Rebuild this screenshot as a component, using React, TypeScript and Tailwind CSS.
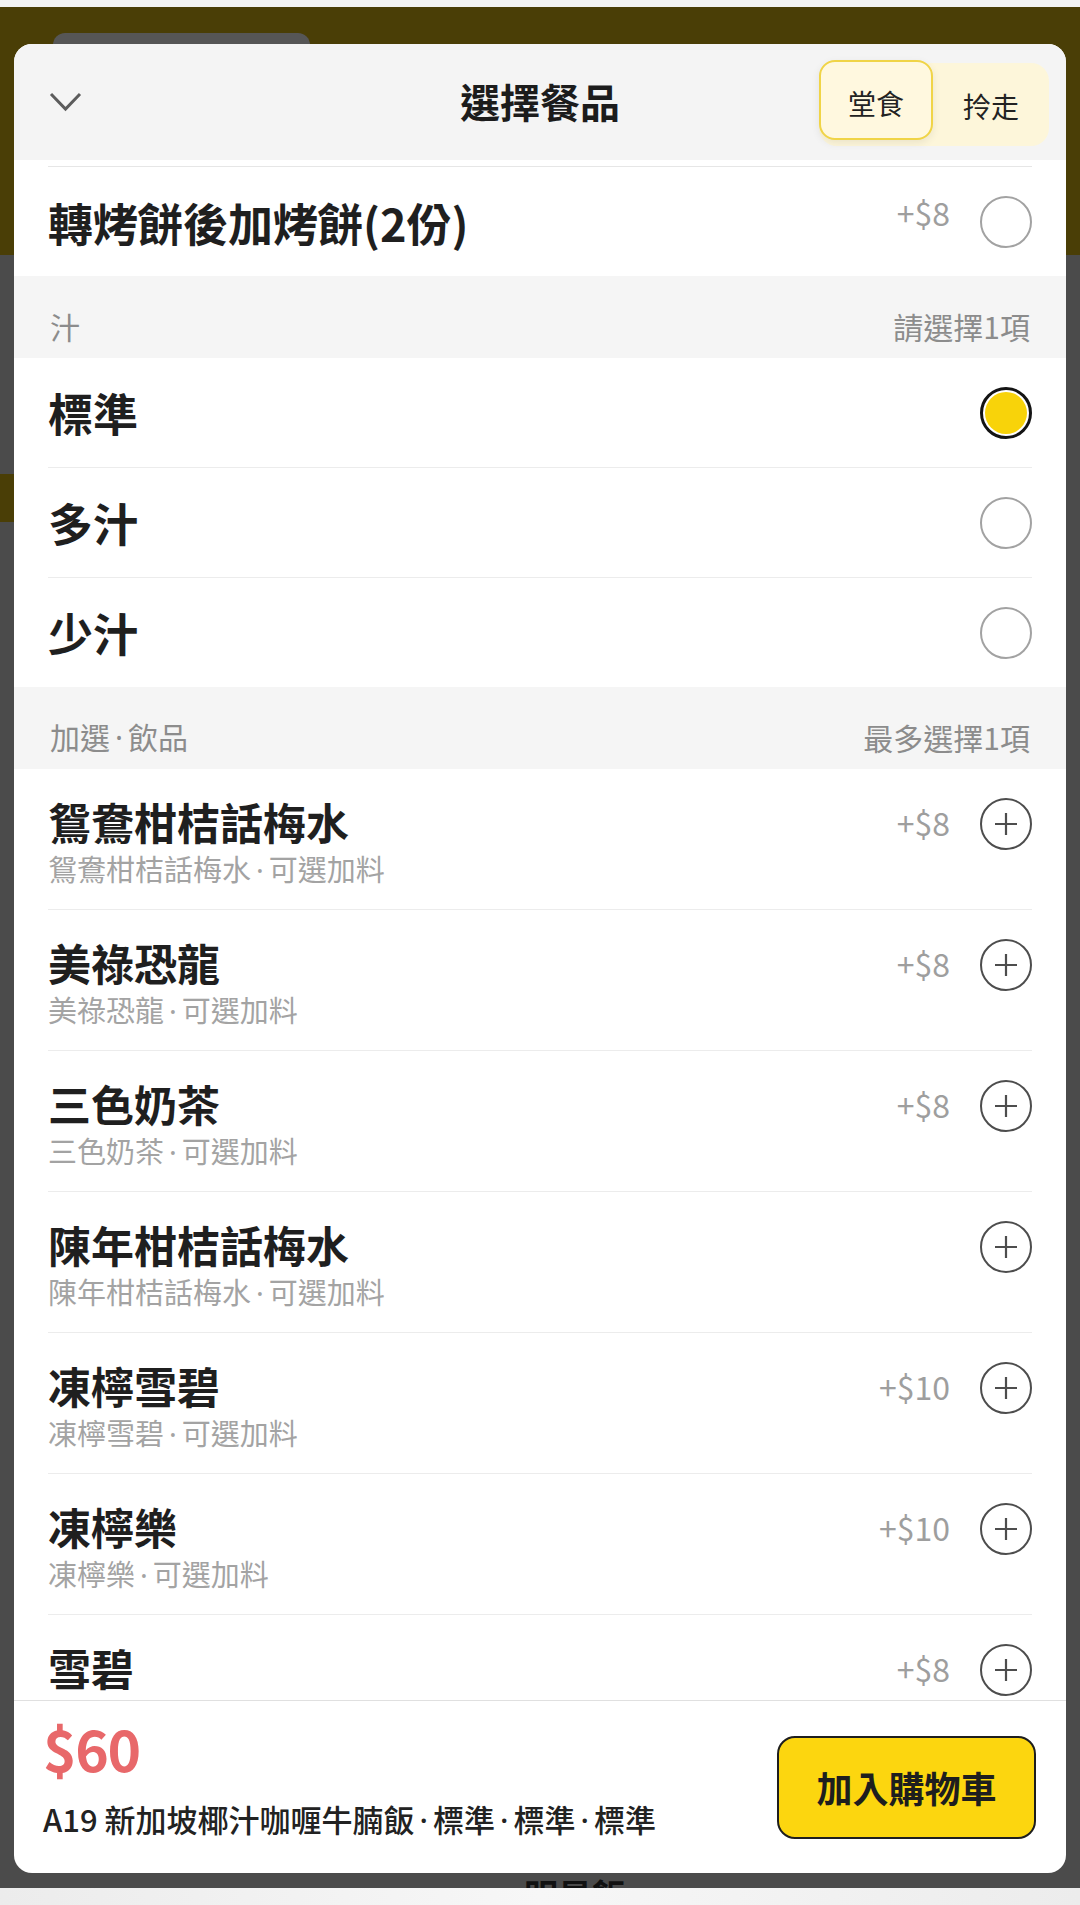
import React from "react";

const font = { fontFamily: '"Noto Sans CJK TC", "Noto Sans", sans-serif' };

// narrow middle dot, like the one the app renders between words
function Dot() {
  return <span className="font-['Noto_Sans'] px-[5px]">·</span>;
}

function Radio({ checked }: { checked?: boolean }) {
  if (checked) {
    return (
      <div className="w-[52px] h-[52px] shrink-0 rounded-full border-[3px] border-[#141414] bg-white p-[2px]">
        <div className="w-full h-full rounded-full bg-[#f8d30a]" />
      </div>
    );
  }
  return <div className="w-[52px] h-[52px] shrink-0 rounded-full border-[2.5px] border-[#a2a2a2]" />;
}

function PlusCircle() {
  return (
    <div className="w-[52px] h-[52px] shrink-0 rounded-full border-[2.5px] border-[#4d4d4d] flex items-center justify-center">
      <svg width="24" height="24" viewBox="0 0 24 24" fill="none" stroke="#4d4d4d" strokeWidth="2.2">
        <path d="M12 1v22M1 12h22" />
      </svg>
    </div>
  );
}

const options = [
  { name: "標準", checked: true },
  { name: "多汁" },
  { name: "少汁" },
];

const drinks = [
  { name: "鴛鴦柑桔話梅水", price: "+$8" },
  { name: "美祿恐龍", price: "+$8" },
  { name: "三色奶茶", price: "+$8" },
  { name: "陳年柑桔話梅水", price: "" },
  { name: "凍檸雪碧", price: "+$10" },
  { name: "凍檸樂", price: "+$10" },
];

export default function App() {
  return (
    <div className="relative w-[1080px] h-[1905px] overflow-hidden flex flex-col" style={font}>
      {/* background page under the dim overlay */}
      <div className="h-[7px] bg-[#f3f3f3]" />
      <div className="h-[248px] bg-[#4a3e06]">
        <div className="mt-[26px] ml-[53px] w-[257px] h-[20px] rounded-t-[12px] bg-[#565656]" />
      </div>
      <div className="flex-1 bg-[#4b4b4b] flex flex-col">
        <div className="mt-[219px] h-[48px] w-[14px] bg-[#4a3e06]" />
        <div className="mt-auto h-[15px] overflow-hidden flex justify-center">
          <span className="text-[34px] font-bold leading-[40px] text-[#111] mt-[2px] ml-[70px]">明星飯</span>
        </div>
      </div>
      <div className="h-[17px] bg-gradient-to-r from-[#ececec] via-[#f7f7f7] to-[#ececec]" />

      {/* bottom sheet */}
      <div className="absolute left-[14px] top-[44px] w-[1052px] h-[1829px] rounded-[18px] overflow-hidden bg-white flex flex-col">
        <div className="h-[116px] shrink-0 bg-[#f4f4f4] grid grid-cols-[1fr_auto_1fr] items-center">
          <div className="pl-[35px]">
            <svg width="33" height="20" viewBox="0 0 33 20" fill="none" stroke="#5c5c5c" strokeWidth="3">
              <path d="M2 2l14.5 15L31 2" />
            </svg>
          </div>
          <div className="text-[40px] font-bold leading-[50px] text-[#1c1c1c] -mt-[2px]">選擇餐品</div>
          <div className="flex justify-end pr-[17px]">
            <div className="mt-[5px] h-[83px] w-[230px] rounded-[18px] bg-[#fdf6da] flex items-start">
              <div className="-mt-[3px] h-[80px] w-[114px] rounded-[16px] border-2 border-[#f0d447] bg-[#fff8df] shadow-[0_3px_8px_rgba(0,0,0,0.08)] flex items-center justify-center text-[28px] leading-[36px] text-[#222] pt-[6px]">
                堂食
              </div>
              <div className="flex-1 h-[80px] flex items-center justify-center text-[28px] leading-[36px] text-[#222] pt-[6px]">
                拎走
              </div>
            </div>
          </div>
        </div>

        <div className="flex-1 overflow-hidden">
          <div className="h-[6px]" />
          <div className="mx-[34px] h-[110px] border-t border-[#e6e6e6] flex items-center justify-between">
            <div className="text-[45px] font-bold leading-[52px] text-[#1f1f1f] mt-[2px]">轉烤餅後加烤餅(2份)</div>
            <div className="flex items-center gap-[30px]">
              <span className="text-[32px] leading-[40px] text-[#9e9e9e] -translate-y-[10px]">+$8</span>
              <Radio />
            </div>
          </div>

          <div className="h-[82px] bg-[#f5f5f5] px-[36px] pt-[18px] flex items-center justify-between text-[30px] leading-[40px] text-[#8c8c8c]">
            <span>汁</span>
            <span>請選擇1項</span>
          </div>
          {options.map((o, i) => (
            <div
              key={o.name}
              className={
                "mx-[34px] flex items-center justify-between " +
                (i < options.length - 1 ? "h-[110px] border-b border-[#ececec]" : "h-[109px]")
              }
            >
              <span className="text-[45px] font-bold leading-[52px] text-[#1f1f1f]">{o.name}</span>
              <Radio checked={o.checked} />
            </div>
          ))}

          <div className="h-[82px] bg-[#f5f5f5] px-[36px] pt-[18px] flex items-center justify-between text-[30px] leading-[40px] text-[#8c8c8c]">
            <span>
              加選<Dot />飲品
            </span>
            <span>最多選擇1項</span>
          </div>
          {drinks.map((d) => (
            <div key={d.name} className="mx-[34px] h-[141px] border-b border-[#ececec] pt-[27px] flex justify-between">
              <div className="flex flex-col">
                <span className="text-[43px] font-bold leading-[50px] text-[#1f1f1f]">{d.name}</span>
                <span className="mt-[4px] text-[29px] leading-[36px] text-[#a3a3a3]">
                  {d.name}
                  <Dot />
                  可選加料
                </span>
              </div>
              <div className="flex items-center gap-[30px] h-[52px] mt-[2px]">
                {d.price && <span className="text-[32px] leading-[40px] text-[#9e9e9e] -mt-[4px]">{d.price}</span>}
                <PlusCircle />
              </div>
            </div>
          ))}
          <div className="mx-[34px] h-[141px] pt-[27px] flex justify-between">
            <span className="text-[43px] font-bold leading-[50px] text-[#1f1f1f]">雪碧</span>
            <div className="flex items-center gap-[30px] h-[52px] mt-[2px]">
              <span className="text-[32px] leading-[40px] text-[#9e9e9e] -mt-[4px]">+$8</span>
              <PlusCircle />
            </div>
          </div>
        </div>

        <div className="h-[173px] shrink-0 border-t border-[#e0e0e0] pl-[29px] pr-[30px] flex items-center justify-between">
          <div className="self-start pt-[14px] flex flex-col">
            <span className="text-[57px] font-semibold leading-[64px] tracking-tight text-[#e8686a]">$60</span>
            <span className="mt-[20px] text-[31px] font-medium leading-[40px] text-[#222]">
              A19 新加坡椰汁咖喱牛腩飯<Dot />標準<Dot />標準<Dot />標準
            </span>
          </div>
          <button className="w-[259px] h-[103px] rounded-[18px] border-2 border-[#1e1e1e] bg-[#fcd60f] text-[36px] font-bold leading-[44px] text-[#1e1e1e]">
            加入購物車
          </button>
        </div>
      </div>
    </div>
  );
}
